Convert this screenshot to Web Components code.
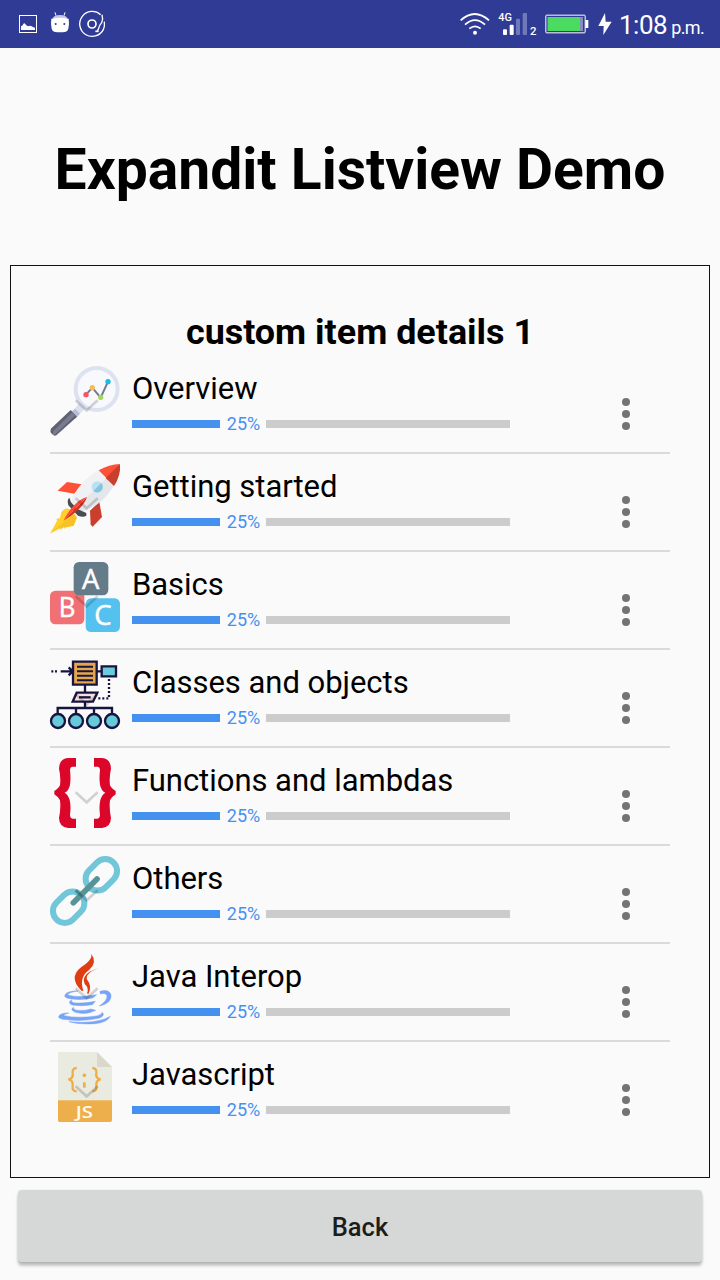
<!DOCTYPE html>
<html lang="en">
<head>
<meta charset="utf-8">
<title>Expandit Listview Demo</title>
<style>
html,body{margin:0;padding:0}
body{width:720px;height:1280px;overflow:hidden;background:#fafafa;font-family:Roboto,"Liberation Sans",sans-serif;color:#000}
</style>
</head>
<body>
<demo-screen></demo-screen>
<script>
const define = (name, html, setup) => customElements.define(name, class extends HTMLElement {
  connectedCallback() {
    if (this.shadowRoot) return;
    const t = document.createElement('template');
    t.innerHTML = html;
    this.attachShadow({mode: 'open'}).append(t.content.cloneNode(true));
    if (setup) setup(this, this.shadowRoot);
  }
});

define('status-bar', `
<style>
:host{display:flex;justify-content:space-between;height:48px;background:#2f3b95;color:#fff;overflow:hidden}
svg{display:block;flex:none}
.right{display:flex}
.time{width:101px;display:flex;align-items:baseline;font-size:26px;line-height:51px;white-space:nowrap;letter-spacing:-.5px}
.time small{font-size:18px;margin-left:4px;letter-spacing:-.6px}
</style>
<svg width="110" height="48" viewBox="0 0 330 144" fill="none" stroke="#fff">
  <rect x="58.500" y="46.500" width="51" height="51" stroke-width="3"/>
  <path fill="#fff" stroke="none" d="M63 90V79l5-3 2-5 4-1 5 6 5 3 6-2 5 2 5 3 5 1v7z"/>
  <path stroke-width="3" d="M165 37l3 10M195 37l-3 10"/>
  <path fill="#c3c7e5" stroke="none" d="M158 56q3-11 22-11t22 11z"/>
  <path fill="#fff" stroke="none" d="M154 56q26-5 52 0l1 15-2 15q-2 9-10 10-15 2-30 0-8-1-10-10l-2-15z"/>
  <circle cx="167" cy="72" r="3" fill="#2f3b95" stroke="none"/><circle cx="193" cy="72" r="3" fill="#2f3b95" stroke="none"/>
  <path stroke-width="4" d="M302 44A37.500 37.500 0 1 0 310 89Q315 78 313 65"/>
  <circle cx="276" cy="72" r="12" stroke-width="5"/>
  <path stroke-width="4" d="M306 44q4 12-1 24-7 8-9 17l-4 9"/>
  <path stroke-width="5" d="M286 94h10"/>
</svg>
<div class="right">
<svg width="169" height="48" viewBox="0 0 507 144" fill="none">
  <g stroke="#fff" stroke-width="5.500"><path d="M32 61Q74 23 117 61M45 74q30-27 60 0M58 86q17-14 34 0"/></g>
  <circle cx="75" cy="98" r="6" fill="#fff"/>
  <text x="145" y="63" font-size="31" font-weight="500" fill="#fff" textLength="41" lengthAdjust="spacingAndGlyphs">4G</text>
  <g fill="#fff"><rect x="159" y="88" width="12" height="17" rx="3"/><rect x="179" y="74" width="12" height="31" rx="3"/></g>
  <g fill="#6f78b8"><rect x="198" y="56" width="12" height="49" rx="3"/><rect x="218" y="39" width="13" height="66" rx="3"/></g>
  <text x="240" y="105" font-size="34" font-weight="500" fill="#fff">2</text>
  <rect x="287.500" y="45.500" width="118" height="53" rx="2" stroke="#fff" stroke-width="3"/>
  <rect x="293" y="51" width="106" height="42" fill="#858dbe"/><rect x="293" y="51" width="97" height="42" fill="#4cdb61"/>
  <path fill="#fff" d="M406 60h9v24h-9z"/>
  <path fill="#fff" d="M465 39l-20 39h16l-1 27 25-40h-18z"/>
</svg>
<div class="time"><span>1:08</span><small>p.m.</small></div>
</div>`);

const chevron = '<path d="M107 130L140 160L173 130" fill="none" stroke="#000" stroke-opacity=".16" stroke-width="8"/>';
const braceLeft = 'M108 27v26H98q-8 1-8 11 3 25 0 43-3 17-16 24 13 8 16 27 3 18 0 39 0 10 8 12h10v28H84q-26-2-27-30 6-30 3-53-3-9-17-18v-10q14-9 17-17 3-24-3-50 1-30 27-32z';
const icons = {
  overview: `<circle cx="170" cy="96" r="63" fill="#f8f9fd" stroke="#dde2f0" stroke-width="12"/>
    <path d="M138 113l19-21 25 30 22-48" fill="none" stroke="#737990" stroke-width="6"/>
    <circle cx="138" cy="113" r="8" fill="#fa5462"/><circle cx="157" cy="92" r="8" fill="#f6bb58"/><circle cx="182" cy="121" r="8" fill="#a4d85d"/><circle cx="204" cy="74" r="8" fill="#18bde7"/>
    <path d="M103 156l14-17 18 16-17 17z" fill="#dce1f1"/><path d="M90 168l15-13 15 15-14 15z" fill="#b8bfd4"/>
    <path d="M31 217l61-58 19 20-61 55q-5 4-10 0l-7-6q-4-5 0-11z" fill="#5f6173"/><path d="M40 222l57-56 9 9-60 57q-5 3-8 0z" fill="#797c8e"/>`,
  rocket: `<path fill="#ffd02b" d="M30 236l21-38-2-6 11-3 4-18q14-16 27-7l20 24-10 25-23 4-6 5 2-7-15 11 4-8z"/><path fill="#f0a91e" d="M34 232l72-58 4 12-10 26-23 4-6 5 2-7-15 11 4-8z" opacity=".4"/>
    <path fill="#ff5138" d="M53 107l28-26 44 7-22 28z"/><path fill="#c93e2c" d="M150 167l28-26 8 45-28 29-6-6z"/>
    <path fill="#eff1f4" d="M176 46q-43 21-77 77l-5 18 30 29 31-13q48-31 66-66z"/><path fill="#e3e6ea" d="M198 70l23 22q-26 45-66 65l-31 13-14-14z"/>
    <path fill="#4a4c50" d="M88 128q-8 5-3 23l29 31q16 6 25 0v-8l-27-12-19-20z"/>
    <path fill="#ff5138" d="M176 46q31-18 64-19l-35 48z"/><path fill="#c93e2c" d="M240 27q3 35-18 66l-25-24z"/>
    <circle cx="172" cy="96" r="17" fill="#b7e2f2"/><path d="M184 84a17 17 0 0 1-24 24z" fill="#87c4dc"/>
    <path fill="#ff4934" d="M141 126q-20 3-49 36-10 13-22 35z"/><path fill="#c93527" d="M141 126q-6 21-34 45-15 14-37 26z"/>`,
  blocks: `<rect x="30" y="113" width="103" height="101" rx="16" fill="#f07074"/><rect x="137" y="136" width="103" height="101" rx="16" fill="#55c1ef"/><rect x="101" y="27" width="104" height="100" rx="16" fill="#647b89"/>
    <g fill="#fff" stroke="#fff" stroke-width="1.500" font-family="Open Sans,sans-serif" font-size="84" text-anchor="middle"><text x="152" y="108" textLength="52" lengthAdjust="spacingAndGlyphs">A</text><text x="81" y="192" textLength="50" lengthAdjust="spacingAndGlyphs">B</text><text x="189" y="217" textLength="52" lengthAdjust="spacingAndGlyphs">C</text></g>`,
  classes: `<g fill="none" stroke="#181442" stroke-width="7"><path d="M34 61h6M45 61h6M62 61h35M86 49l12 12-12 12M170 61h15M135 102v23M135 151v24M53 188v-17h163v17M108 171v17M162 171v17"/>
    <path d="M207 84v58h-38" stroke-dasharray="6 6"/><path d="M99 32h71v69H99z" fill="#e6a64a"/><path d="M111 47h48M111 61h48M111 74h48M111 88h48" stroke-width="6"/>
    <path d="M185 46h43v30h-43z" fill="#69cbdc"/><path d="M110 125h62l-13 27H98z" fill="#f7dfdc"/><path d="M117 139h35"/>
    <g fill="#66cad9"><circle cx="54" cy="210" r="21"/><circle cx="108" cy="210" r="21"/><circle cx="162" cy="210" r="21"/><circle cx="216" cy="210" r="21"/></g></g>`,
  braces: `<path fill="#db0629" d="${braceLeft}"/><path fill="#db0629" transform="translate(270 0) scale(-1 1)" d="${braceLeft}"/>`,
  link: `<g fill="none" stroke="#72c6d9" stroke-width="18"><rect x="34" y="145" width="104" height="71" rx="35.500" transform="rotate(-45 86 180.500)"/><rect x="132" y="48" width="104" height="71" rx="35.500" transform="rotate(-45 184 83.500)"/></g>
    <path d="M100 167l71-71" stroke="#579397" stroke-width="17" stroke-linecap="round"/><path d="M107 130l18 17" stroke="#397a80" stroke-width="9" opacity=".5"/>`,
  java: `<g fill="#df3e12"><path d="M154 27q19 25-6 47-32 22-18 63l-5 1q-46-47 9-79 23-16 20-32z"/><path d="M175 70q-38 14-35 32 18 20 5 46-3-3-4-3 7-17-7-28-13-30 41-47z"/></g>
    <g fill="#77a4f7" stroke="#77a4f7" stroke-width="1.500"><path d="M114 138q-28 4-31 11 14 7 50 5l37-5-12 10q-39 9-75 1-12-4-8-11 8-12 39-11zM95 164q-4 7 6 9 25 4 65-4l-9 10q-33 6-61 1-15-7-1-16zM101 187q-2 7 10 9 25 2 42-4l14 4q-28 15-61 6-18-8-5-15zM86 204q-18 5-13 8 38 9 97 1 17-4 16-11 12 9-10 18-53 11-107 3-17-4-12-11 8-9 29-8zM87 230q85 8 124-16-10 19-46 22-47 3-78-6z"/><path d="M180 139q26-8 33 10 3 25-35 34 25-17 23-31-5-10-20-5z"/></g>`,
  js: `<path fill="#e9eae0" d="M59 27h112l45 45v100H54V32q0-5 5-5z"/><path fill="#d9d8ca" d="M171 27l45 45h-45z"/><path fill="#edaf4b" d="M54 172h162v60q0 5-5 5H59q-5 0-5-5z"/>
    <g fill="none" stroke="#efae43" stroke-width="7"><path d="M110 75q-13 0-12 14 3 18-13 20 15 2 13 20-2 16 12 16M157 75q13 0 12 14-3 18 13 20-15 2-13 20 2 16-12 16"/></g><circle cx="133" cy="97" r="5.500" fill="#efae43"/><path d="M133 118v16" stroke="#efae43" stroke-width="8"/>
    <text x="133" y="225" text-anchor="middle" font-family="Open Sans,sans-serif" font-weight="600" font-size="51" textLength="52" lengthAdjust="spacingAndGlyphs" fill="#fffaf0">JS</text>`
};

define('topic-icon', `<style>:host{display:block;width:70px;height:70px}svg{display:block;width:70px;height:70px;overflow:visible}</style><div></div>`, (el, root) => {
  root.querySelector('div').innerHTML = `<svg viewBox="30 27 210 210">${icons[el.getAttribute('name')]}${chevron}</svg>`;
});

define('progress-line', `
<style>:host{display:flex;align-items:center;height:24px;width:378px}
.done{width:88px;height:8px;background:#4591f0}.rest{width:244px;height:8px;background:#ccc}
span{box-sizing:border-box;width:46px;padding-left:1px;text-align:center;color:#4591f0;font-size:18px;line-height:24px}</style>
<div class="done"></div><span><slot></slot></span><div class="rest"></div>`);

define('topic-row', `
<style>:host{display:flex;box-sizing:border-box;height:98px;padding-top:10px;border-bottom:2px solid #dadada}
:host(:last-of-type){border-color:transparent}
.body{width:378px;margin-left:12px}
.name{box-sizing:border-box;font-size:31px;line-height:36px;height:41px;padding-top:5px;white-space:nowrap;letter-spacing:-.03px}
progress-line{margin-top:5px}
.menu{display:flex;flex-direction:column;gap:4px;margin:32px 0 0 112px}
.menu i{width:8px;height:8px;border-radius:50%;background:#747474}</style>
<topic-icon></topic-icon><div class="body"><div class="name"><slot></slot></div><progress-line>25%</progress-line></div>
<div class="menu"><i></i><i></i><i></i></div>`, (el, root) => {
  const old = root.querySelector('topic-icon');
  const icon = document.createElement('topic-icon');
  icon.setAttribute('name', el.getAttribute('icon'));
  old.replaceWith(icon);
});

define('details-panel', `
<style>:host{display:block;box-sizing:border-box;height:913px;margin:0 10px;border:1px solid #111;padding:45px 39px 0}
h2{margin:0;height:45px;font-size:35.900px;line-height:43px;font-weight:700;text-align:center;white-space:nowrap}</style>
<h2><slot name="heading"></slot></h2><slot></slot>`);

define('back-button', `
<style>:host{display:block;margin:12px 18px 0}
button{display:block;width:100%;height:72px;border:0;border-radius:4px;padding:2px 0 0;background:#d6d8d7;color:#1c1c1c;font:500 25.500px Roboto,sans-serif;box-shadow:0 4px 3px rgba(0,0,0,.2),0 1px 3px rgba(0,0,0,.15)}</style>
<button><slot></slot></button>`);

define('demo-screen', `
<style>:host{display:flex;flex-direction:column;height:1280px}
h1{margin:0;height:217px;line-height:244px;font-size:57px;font-weight:700;text-align:center;white-space:nowrap}</style>
<status-bar></status-bar>
<h1>Expandit Listview Demo</h1>
<details-panel><span slot="heading">custom item details 1</span>
<topic-row icon="overview">Overview</topic-row>
<topic-row icon="rocket">Getting started</topic-row>
<topic-row icon="blocks">Basics</topic-row>
<topic-row icon="classes">Classes and objects</topic-row>
<topic-row icon="braces">Functions and lambdas</topic-row>
<topic-row icon="link">Others</topic-row>
<topic-row icon="java">Java Interop</topic-row>
<topic-row icon="js">Javascript</topic-row>
</details-panel>
<back-button>Back</back-button>`);
</script>
</body>
</html>
